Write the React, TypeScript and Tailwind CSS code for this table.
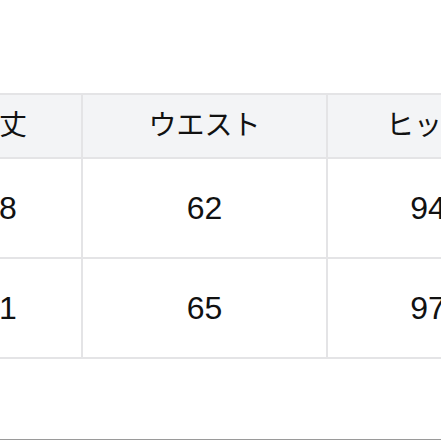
import React from 'react';

const HEADERS = ['着丈', 'ウエスト', 'ヒップ'];
const ROWS = [
  ['68', '62', '94'],
  ['71', '65', '97'],
];
const WIDTHS = ['w-[166px]', 'w-[245px]', 'w-[202px]'];

export default function App() {
  return (
    <div
      className="flex h-[441px] w-[441px] flex-col overflow-hidden bg-white text-[#111]"
      style={{ fontFamily: '"Liberation Sans", "Noto Sans CJK JP", sans-serif' }}
    >
      <div className="w-[700px] pt-[93px]">
        <table className="ml-[-85px] w-[613px] table-fixed border-collapse">
          <colgroup>
            {WIDTHS.map((w) => (
              <col key={w} className={w} />
            ))}
          </colgroup>
          <thead>
            <tr className="bg-[#f3f4f6]">
              {HEADERS.map((h) => (
                <th
                  key={h}
                  className="h-[64px] border-2 border-[#e4e4e6] p-0 text-center text-[28px] font-normal leading-none"
                >
                  {h}
                </th>
              ))}
            </tr>
          </thead>
          <tbody>
            {ROWS.map((row, r) => (
              <tr key={r}>
                {row.map((v, i) => (
                  <td
                    key={i}
                    className="h-[100px] border-2 border-[#e4e4e6] p-0 text-center text-[32px] leading-none"
                  >
                    {v}
                  </td>
                ))}
              </tr>
            ))}
          </tbody>
        </table>
      </div>
      <div className="mt-auto mb-px h-px w-[441px] bg-[#9a9a9a]" />
    </div>
  );
}
